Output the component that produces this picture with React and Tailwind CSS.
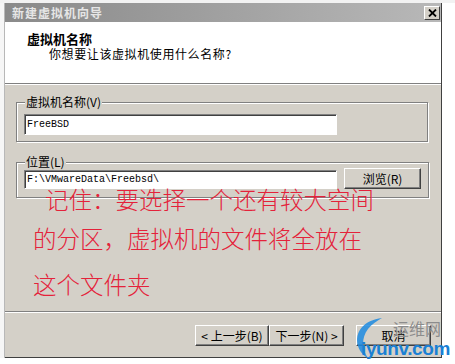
const ui = { fontFamily: '"Noto Sans CJK SC", "Liberation Sans", sans-serif' };
const mono = { fontFamily: '"Liberation Mono", "Noto Sans CJK SC", monospace' };

function WinButton({ children, className = "" }) {
  return (
    <div
      className={
        "flex items-center justify-center bg-[#d4d0c8] border border-t-white border-l-white border-r-[#404040] border-b-[#404040] shadow-[inset_-1px_-1px_0_#808080] text-[12px] leading-none text-black " +
        className
      }
      style={ui}
    >
      {children}
    </div>
  );
}

function Field({ children, className = "" }) {
  return (
    <div
      className={
        "flex items-center bg-white border border-t-[#808080] border-l-[#808080] border-r-white border-b-white shadow-[inset_1px_1px_0_#404040] pl-[2px] text-[10px] text-black " +
        className
      }
      style={mono}
    >
      {children}
    </div>
  );
}

function GroupBox({ label, children, className = "" }) {
  return (
    <fieldset
      className={
        "border border-[#808080] shadow-[1px_1px_0_#fff,inset_1px_1px_0_#fff] px-[7px] w-[412px] " +
        className
      }
    >
      <legend
        className="ml-[1px] px-[1px] bg-[#d4d0c8] text-[12px] leading-[12px] text-black"
        style={ui}
      >
        {label}
      </legend>
      {children}
    </fieldset>
  );
}

export default function App() {
  return (
    <div className="relative w-[455px] h-[364px] bg-white overflow-hidden flex flex-col" style={ui}>
      <div className="h-[3px] bg-[#f2f2f2]" />
      <div className="flex h-[355px]">
        <div className="w-[5px] bg-[#f6f6f6] border-r border-[#b8b8b8]" />

        {/* dialog */}
        <div className="w-[437px] flex flex-col bg-[#d4d0c8] border-r border-b border-[#404040]">
          {/* title bar */}
          <div className="h-[19px] flex items-center justify-between pl-[7px] pr-[1px] bg-gradient-to-r from-[#8a8a8a] to-[#b8b8b8]">
            <span className="text-[12px] font-bold tracking-[1px] text-[#e6e6e6] leading-none">
              新建虚拟机向导
            </span>
            <div className="w-[16px] h-[14px] flex items-center justify-center bg-[#d4d0c8] border border-t-white border-l-white border-r-[#404040] border-b-[#404040]">
              <svg width="9" height="8" viewBox="0 0 9 8">
                <path d="M1 0.5 L8 7.5 M8 0.5 L1 7.5" stroke="#000" strokeWidth="1.8" />
              </svg>
            </div>
          </div>

          {/* header */}
          <div className="h-[61px] bg-white pl-[22px] pt-[9px]">
            <div className="text-[13px] font-bold leading-[15px] text-black">虚拟机名称</div>
            <div className="pl-[22px] mt-[1px] text-[12px] tracking-[0.6px] leading-[14px] text-black">
              你想要让该虚拟机使用什么名称?
            </div>
          </div>
          <div className="h-[2px] border-t border-[#808080] bg-white" />

          {/* body */}
          <div className="flex-1 flex flex-col pl-[11px] pt-[11px]">
            <GroupBox label="虚拟机名称(V)" className="pt-[6px] pb-[6px]">
              <Field className="w-[313px] h-[21px]">FreeBSD</Field>
            </GroupBox>

            <GroupBox label="位置(L)" className="mt-[14px] pt-0 pb-[8px]">
              <div className="flex items-end gap-[7px]">
                <Field className="w-[313px] h-[19px]">F:\VMwareData\Freebsd\</Field>
                <WinButton className="w-[77px] h-[21px]">浏览(R)</WinButton>
              </div>
            </GroupBox>
          </div>

          {/* bottom */}
          <div className="h-[2px] border-t border-[#808080] bg-white" />
          <div className="h-[44px] flex items-start pt-[12px] pl-[190px]">
            <WinButton className="w-[74px] h-[21px]">&lt; 上一步(B)</WinButton>
            <WinButton className="w-[75px] h-[21px]">下一步(N) &gt;</WinButton>
            <WinButton className="w-[75px] h-[21px] ml-[12px]">取消</WinButton>
          </div>
        </div>

        <div className="flex-1 bg-white" />
      </div>

      {/* red annotation */}
      <div
        className="absolute left-[33px] top-[187px] text-[#e4223a] text-[23.5px] leading-[24px] font-light"
        style={{ fontFamily: '"Noto Sans CJK SC", sans-serif' }}
      >
        <div className="pl-[12px]">记住：要选择一个还有较大空间</div>
        <div className="mt-[15px]">的分区，虚拟机的文件将全放在</div>
        <div className="mt-[22px]">这个文件夹</div>
      </div>

      {/* watermark */}
      <div className="absolute left-[352px] top-[316px] w-[103px] h-[46px]">
        <svg className="absolute left-0 top-0" width="40" height="44" viewBox="0 0 40 44">
          <path d="M30 2 C12 4 2 16 6 30 C8 36 12 40 16 42 C10 34 9 22 16 13 C20 8 25 5 30 2 Z" fill="#1d8be0" opacity="0.85" />
        </svg>
        <div className="absolute left-[41px] top-[4px] text-[16px] leading-none text-[#8c8c8c]" style={{ fontFamily: '"Noto Sans CJK SC", sans-serif' }}>
          运维网
        </div>
        <div className="absolute left-[9px] top-[23px] text-[19px] font-bold leading-none text-[#1a80d4] tracking-[-0.4px]" style={{ fontFamily: '"Liberation Sans", sans-serif' }}>
          iyunv.com
        </div>
      </div>
    </div>
  );
}
